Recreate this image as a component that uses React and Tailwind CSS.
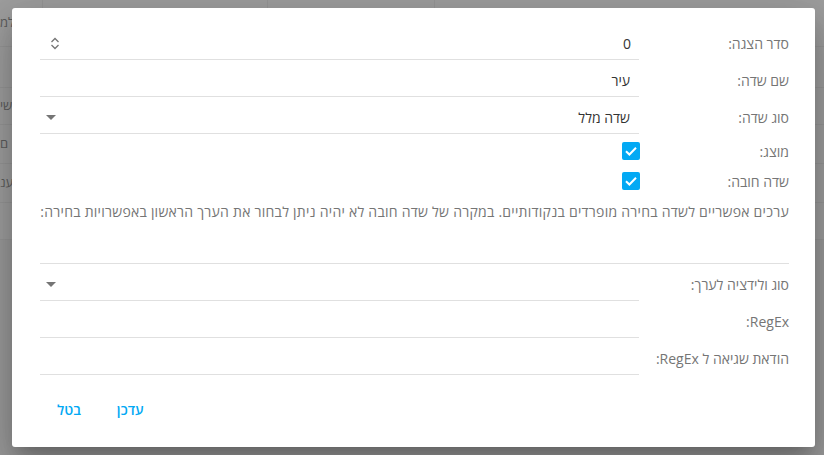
const font = { fontFamily: '"Open Sans", "Noto Sans", sans-serif' };

function Spinner() {
  return (
    <svg width="10" height="13" viewBox="0 0 10 13" fill="none" stroke="#757575" strokeWidth="1.3">
      <path d="M1.5 5 L5 1.5 L8.5 5" />
      <path d="M1.5 8 L5 11.5 L8.5 8" />
    </svg>
  );
}

function Caret() {
  return (
    <svg width="10" height="5" viewBox="0 0 10 5">
      <path d="M0 0 L10 0 L5 5 Z" fill="#757575" />
    </svg>
  );
}

function Check() {
  return (
    <div className="w-[18px] h-[18px] rounded-[2px] bg-[#03a9f4] flex items-center justify-center">
      <svg width="18" height="18" viewBox="0 0 18 18" fill="none" stroke="white" strokeWidth="2">
        <path d="M4 9.2 L7.4 12.5 L14 5.8" />
      </svg>
    </div>
  );
}

function FieldRow({ label, children }) {
  return (
    <div className="flex h-[37px]">
      <div className="w-[150px] shrink-0 pt-[4px] flex items-center text-[14px] text-[#757575]">{label}</div>
      <div className="flex-1 pt-[4px] border-b border-[#e0e0e0] flex items-center justify-between text-[14px] text-[#333]">
        {children}
      </div>
    </div>
  );
}

function CheckRow({ label }) {
  return (
    <div className="flex h-[30px] items-center">
      <div className="w-[149px] shrink-0 text-[14px] text-[#757575]">{label}</div>
      <div className="flex-1 flex items-center">
        <Check />
      </div>
    </div>
  );
}

const bgRows = [
  { h: "h-[47px]", t: "למ" },
  { h: "h-[41px]", t: "" },
  { h: "h-[37px]", t: "שי" },
  { h: "h-[39px]", t: "ם" },
  { h: "h-[39px]", t: "ענ" },
  { h: "h-[37px]", t: "" },
];

export default function App() {
  return (
    <div className="relative w-[824px] h-[455px] overflow-hidden bg-[#9a9a9a]" style={font}>
      <div className="flex flex-col bg-[#9e9e9e]">
        {bgRows.map((r, i) => (
          <div key={i} className={`flex ${r.h} border-b border-[#969696]`}>
            <div className="w-[43px] border-r border-[#969696] flex items-center text-[13px] text-[#5c5c5c] overflow-hidden">
              <span dir="rtl">{r.t}</span>
            </div>
            <div className="w-[225px] border-r border-[#969696]" />
            <div className="w-[167px] border-r border-[#969696]" />
            <div className="flex-1" />
          </div>
        ))}
      </div>

      <div
        dir="rtl"
        className="absolute left-[12px] top-[8px] w-[803px] h-[439px] bg-white rounded-[3px] shadow-[0_11px_15px_-7px_rgba(0,0,0,0.2),0_24px_38px_3px_rgba(0,0,0,0.14),0_9px_46px_8px_rgba(0,0,0,0.12)] pt-[15px] pr-[26px] pl-[28px] flex flex-col"
      >
        <FieldRow label="סדר הצגה:">
          <span className="pr-[8px]">0</span>
          <span className="pl-[10px] flex items-center"><Spinner /></span>
        </FieldRow>
        <FieldRow label="שם שדה:">
          <span className="pr-[9px]">עיר</span>
        </FieldRow>
        <FieldRow label="סוג שדה:">
          <span className="pr-[9px]">שדה מלל</span>
          <span className="pl-[6px] flex items-center"><Caret /></span>
        </FieldRow>

        <div className="mt-[2px]">
          <CheckRow label="מוצג:" />
          <CheckRow label="שדה חובה:" />
        </div>

        <div className="h-[68px] border-b border-[#e0e0e0] pt-[6px] text-[14px] leading-[20px] tracking-[0.25px] text-[#757575] whitespace-nowrap">
          ערכים אפשריים לשדה בחירה מופרדים בנקודותיים. במקרה של שדה חובה לא יהיה ניתן לבחור את הערך הראשון באפשרויות בחירה:
        </div>

        <FieldRow label="סוג ולידציה לערך:">
          <span />
          <span className="pl-[6px] flex items-center"><Caret /></span>
        </FieldRow>
        <FieldRow label="RegEx:" />
        <FieldRow label="הודאת שגיאה ל RegEx:" />

        <div className="flex justify-end gap-[4px] mt-[16px] pl-[1px]">
          <button className="h-[36px] px-[16px] text-[14px] font-semibold text-[#03a9f4]">עדכן</button>
          <button className="h-[36px] px-[16px] text-[14px] font-semibold text-[#03a9f4]">בטל</button>
        </div>
      </div>
    </div>
  );
}
